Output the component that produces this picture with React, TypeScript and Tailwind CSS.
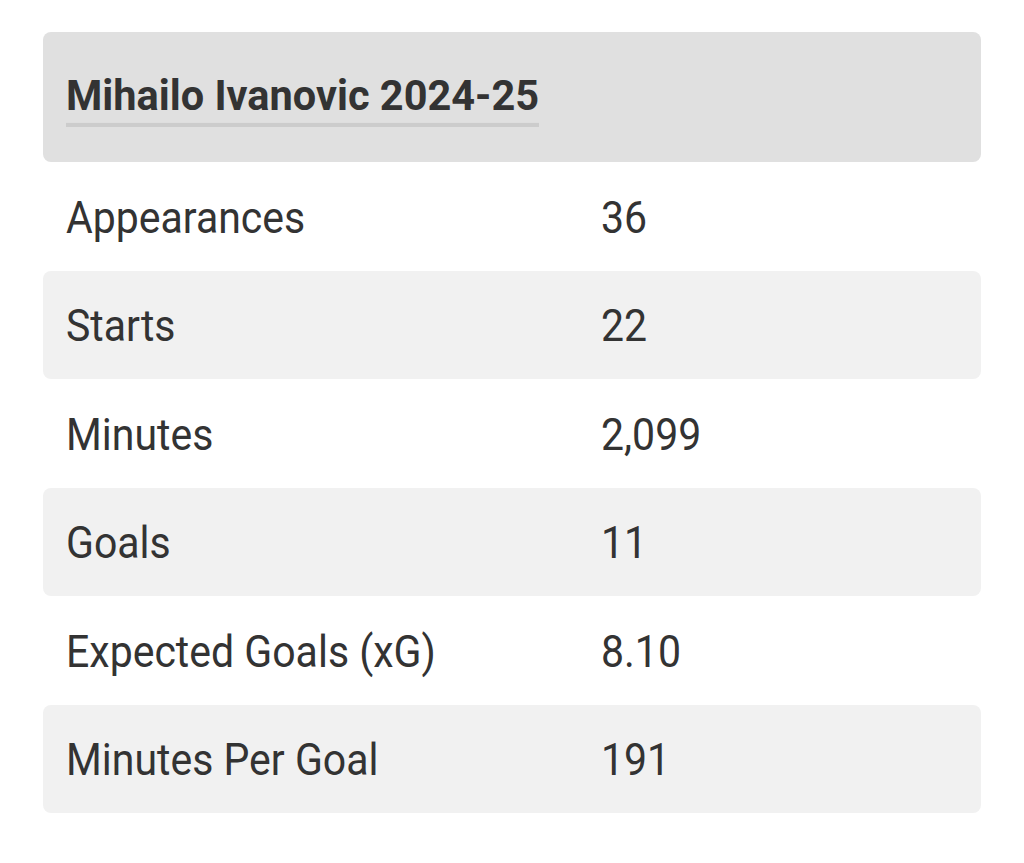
import React from 'react'

const stats: { label: string; value: string }[] = [
  { label: 'Appearances', value: '36' },
  { label: 'Starts', value: '22' },
  { label: 'Minutes', value: '2,099' },
  { label: 'Goals', value: '11' },
  { label: 'Expected Goals (xG)', value: '8.10' },
  { label: 'Minutes Per Goal', value: '191' },
]

const App: React.FC = () => {
  return (
    <div
      className="min-h-screen bg-white pt-[32px] pl-[43px] text-[#333333]"
      style={{ fontFamily: 'Roboto, "Liberation Sans", sans-serif' }}
    >
      <div className="w-[938px]">
        <div className="h-[130px] rounded-lg bg-[#e0e0e0] flex items-center px-[23px]">
          <h2 className="text-[41.5px] font-bold leading-none border-b-[4px] border-[#cccccc] pb-[5px] mt-[7px] scale-y-[1.04]">
            Mihailo Ivanovic 2024-25
          </h2>
        </div>

        {stats.map((s, i) => (
          <div
            key={s.label}
            className={
              'h-[108.5px] flex items-center rounded-lg px-[23px] pt-[4px] text-[41px] ' +
              (i % 2 === 1 ? 'bg-[#f1f1f1]' : 'bg-white')
            }
          >
            <span className="w-[535px] scale-y-[1.06] origin-left">{s.label}</span>
            <span className="scale-y-[1.06]">{s.value}</span>
          </div>
        ))}
      </div>
    </div>
  )
}

export default App
